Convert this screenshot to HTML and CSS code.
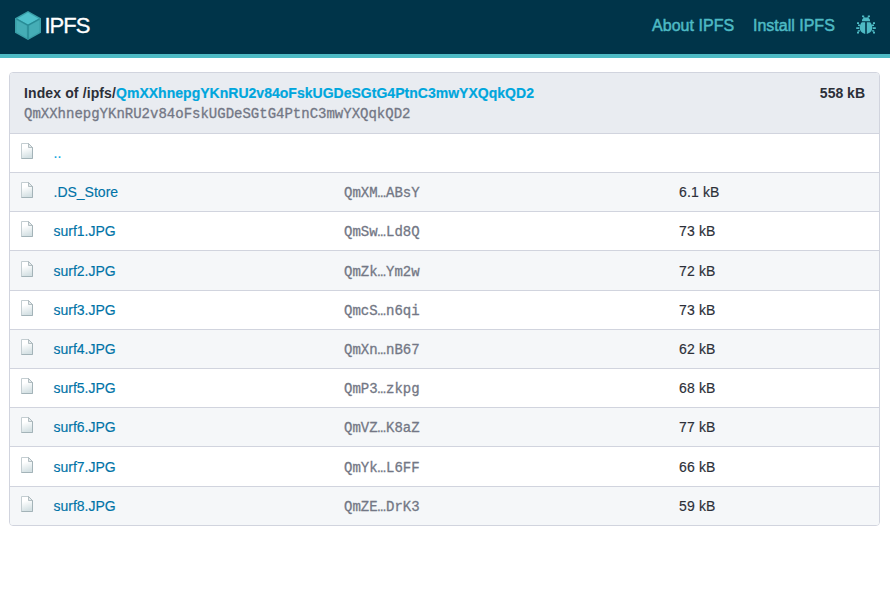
FILE: index.html
```html
<!DOCTYPE html>
<html lang="en">
<head>
<meta charset="utf-8">
<title>/ipfs/QmXXhnepgYKnRU2v84oFskUGDeSGtG4PtnC3mwYXQqkQD2</title>
<link rel="stylesheet" href="styles.css">
</head>
<body>
<svg class="defs" width="0" height="0">
  <linearGradient id="paper" x1="0" y1="0" x2="0.25" y2="1"><stop offset="0.35" stop-color="#fff"/><stop offset="1" stop-color="#d5e1e4"/></linearGradient>
  <symbol id="file" viewBox="0 0 12 16">
    <path d="M.5.500h7l4 4v11H.5z" fill="url(#paper)" stroke="#c3cdd1"/>
    <path d="M11.500 4.500v11H.5" fill="none" stroke="#a3b3b8"/>
    <path d="M7.500.5v4h4z" fill="#e5eced" stroke="#a5b1b6" stroke-width=".8"/>
  </symbol>
</svg>
<header class="topbar">
  <a class="brand">
    <svg class="cube" viewBox="0 0 26 29">
      <path d="M13 0l13 7.3v14.4L13 29 0 21.700V7.300z" fill="#3a9fa8"/>
      <path d="M13 1.600l10.800 6.100L13 13.600 2.200 7.700z" fill="#4fc1cb"/>
      <path d="M1.600 9.200l10.200 5.600v11.900L1.600 21z" fill="#45adb6"/>
      <path d="M24.400 9.200l-10.200 5.600v11.900L24.400 21z" fill="#45adb6"/>
      <path d="M1.300 7.700L13 14.200l11.700-6.500M13 14v14" fill="none" stroke="#278a95" stroke-width="1.200"/>
    </svg>
    <span class="name">IPFS</span>
  </a>
  <nav class="links">
    <a class="about">About IPFS</a>
    <a class="install">Install IPFS</a>
    <svg class="bug" viewBox="0 0 20 20" fill="#4ebac4">
      <path d="M6 4.700C6.600 3 8.100 2.500 10 2.500s3.400.5 4 2.200v1.600H6z"/>
      <path d="M6 .4h2.200v1.300L9 2.800H7.500L6 1.800zM14 .4h-2.200v1.300L11 2.800h1.500L14 1.800z"/>
      <path d="M9.200 7.300v11.600C6 18.500 3.700 15.800 3.700 12.600c0-2 .8-4 2.100-5.300zM10.800 7.300v11.600c3.200-.4 5.500-3.100 5.500-6.300 0-2-.8-4-2.100-5.300z"/>
      <path d="M1 7.300h2v1.800H1zM2 9.400h2v1.500H2zM.2 12.200h3v1.800h-3zM1.800 15.200h2.400v1.400H1.800zM1 16.800h2v1.700H1zM17 7.300h2v1.800h-2zM16 9.400h2v1.500h-2zM16.800 12.200h3v1.800h-3zM15.800 15.200h2.400v1.400h-2.400zM17 16.800h2v1.700h-2z"/>
    </svg>
  </nav>
</header>
<main class="panel">
  <div class="summary">
    <div>
      <div class="title"><span class="prefix">Index of /ipfs/</span><a class="root">QmXXhnepgYKnRU2v84oFskUGDeSGtG4PtnC3mwYXQqkQD2</a></div>
      <div class="hash">QmXXhnepgYKnRU2v84oFskUGDeSGtG4PtnC3mwYXQqkQD2</div>
    </div>
    <div class="total">558 kB</div>
  </div>
  <div class="row"><svg class="icon"><use href="#file"/></svg><a class="file parent">..</a></div>
  <div class="row"><svg class="icon"><use href="#file"/></svg><a class="file">.DS_Store</a><span class="hash">QmXM…ABsY</span><span class="size">6.1 kB</span></div>
  <div class="row"><svg class="icon"><use href="#file"/></svg><a class="file">surf1.JPG</a><span class="hash">QmSw…Ld8Q</span><span class="size">73 kB</span></div>
  <div class="row"><svg class="icon"><use href="#file"/></svg><a class="file">surf2.JPG</a><span class="hash">QmZk…Ym2w</span><span class="size">72 kB</span></div>
  <div class="row"><svg class="icon"><use href="#file"/></svg><a class="file">surf3.JPG</a><span class="hash">QmcS…n6qi</span><span class="size">73 kB</span></div>
  <div class="row"><svg class="icon"><use href="#file"/></svg><a class="file">surf4.JPG</a><span class="hash">QmXn…nB67</span><span class="size">62 kB</span></div>
  <div class="row"><svg class="icon"><use href="#file"/></svg><a class="file">surf5.JPG</a><span class="hash">QmP3…zkpg</span><span class="size">68 kB</span></div>
  <div class="row"><svg class="icon"><use href="#file"/></svg><a class="file">surf6.JPG</a><span class="hash">QmVZ…K8aZ</span><span class="size">77 kB</span></div>
  <div class="row"><svg class="icon"><use href="#file"/></svg><a class="file">surf7.JPG</a><span class="hash">QmYk…L6FF</span><span class="size">66 kB</span></div>
  <div class="row"><svg class="icon"><use href="#file"/></svg><a class="file">surf8.JPG</a><span class="hash">QmZE…DrK3</span><span class="size">59 kB</span></div>
</main>
</body>
</html>
```
FILE: styles.css
```css
* { box-sizing: border-box; }
body {
  margin: 0;
  background: #fff;
  color: #2c2f38;
  font: 14px/20px "Liberation Sans", Arial, sans-serif;
}
.defs { display: block; }
.topbar {
  display: flex;
  justify-content: space-between;
  height: 58px;
  padding: 0 14px 0 15px;
  background: #003449;
  border-bottom: 4px solid #4ebac4;
}
.brand { display: flex; padding-top: 11px; }
.cube { width: 26px; height: 29px; }
.name { margin-left: 3.500px; color: #fff; font-size: 22px; line-height: 29px; letter-spacing: -1px; -webkit-text-stroke: .3px #fff; }
.links {
  display: flex;
  padding-top: 15px;
  color: #4ebac4;
  font-size: 16px;
  line-height: 22px;
  -webkit-text-stroke: .5px #4ebac4;
}
.about { width: 101px; letter-spacing: .05px; }
.install { width: 103px; }
.bug { width: 20px; height: 20px; }
.panel {
  width: 871px;
  margin: 14px 0 0 9px;
  border: 1px solid #d1d4de;
  border-radius: 4px;
  overflow: hidden;
}
.summary {
  display: flex;
  justify-content: space-between;
  height: 59.98px;
  padding: 10px 14px 0;
  background: #e9ecf1;
}
.title, .total { font-weight: 700; }
.prefix { letter-spacing: .12px; }
.root { color: #00a6dd; letter-spacing: .02px; -webkit-text-stroke: .2px #00a6dd; }
.hash { color: #737785; font-family: "Liberation Mono", "Courier New", monospace; -webkit-text-stroke: .3px #737785; }
.summary .hash { line-height: 22px; }
.row {
  display: grid;
  grid-template-columns: 32.500px 290.500px 335px 1fr;
  height: 39.175px;
  padding: 9.175px 11px 0;
  border-top: 1px solid #d1d4de;
}
.row:nth-child(odd) { background: #f5f7f9; }
.row .hash { padding-top: 1px; }
.icon { width: 12px; height: 16px; }
.file { color: #0073a7; -webkit-text-stroke: .15px; }
.size { letter-spacing: .15px; -webkit-text-stroke: .15px; }
.parent { color: #00a6dd; }
```
